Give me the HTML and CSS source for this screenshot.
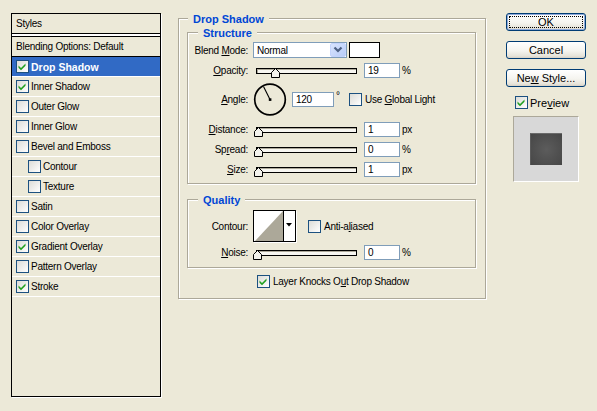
FILE: index.html
```html
<!DOCTYPE html>
<html>
<head>
<meta charset="utf-8">
<title>Layer Style</title>
<link rel="stylesheet" href="styles.css">
</head>
<body>
<div class="dialog">
  <div class="styles">
    <div class="styles-head">Styles</div>
    <div class="blend-opts">Blending Options: Default</div>
    <ul class="fx-list">
      <li class="fx selected"><span class="cb"><svg width="11" height="11" viewBox="0 0 11 11"><path d="M1.5 4.5 L4 7 L8.5 2.5 L8.5 4.8 L4 9.3 L1.5 6.8 Z" fill="#21a121"/></svg></span>Drop Shadow</li>
      <li class="fx"><span class="cb"><svg width="11" height="11" viewBox="0 0 11 11"><path d="M1.5 4.5 L4 7 L8.5 2.5 L8.5 4.8 L4 9.3 L1.5 6.8 Z" fill="#21a121"/></svg></span>Inner Shadow</li>
      <li class="fx"><span class="cb"></span>Outer Glow</li>
      <li class="fx"><span class="cb"></span>Inner Glow</li>
      <li class="fx"><span class="cb"></span>Bevel and Emboss</li>
      <li class="fx sub"><span class="cb"></span>Contour</li>
      <li class="fx sub"><span class="cb"></span>Texture</li>
      <li class="fx"><span class="cb"></span>Satin</li>
      <li class="fx"><span class="cb"></span>Color Overlay</li>
      <li class="fx"><span class="cb"><svg width="11" height="11" viewBox="0 0 11 11"><path d="M1.5 4.5 L4 7 L8.5 2.5 L8.5 4.8 L4 9.3 L1.5 6.8 Z" fill="#21a121"/></svg></span>Gradient Overlay</li>
      <li class="fx"><span class="cb"></span>Pattern Overlay</li>
      <li class="fx"><span class="cb"><svg width="11" height="11" viewBox="0 0 11 11"><path d="M1.5 4.5 L4 7 L8.5 2.5 L8.5 4.8 L4 9.3 L1.5 6.8 Z" fill="#21a121"/></svg></span>Stroke</li>
    </ul>
  </div>

  <div class="main">
    <div class="group outer">
      <div class="group-title">Drop Shadow</div>

      <div class="group sub-group structure">
        <div class="group-title">Structure</div>
        <div class="row r-blend">
          <span class="lbl">Blend <u>M</u>ode:</span>
          <div class="select"><span class="sel-text">Normal</span><span class="sel-btn"><svg width="14" height="12" viewBox="0 0 14 12"><polyline points="3.5,3.5 7,7 10.5,3.5" fill="none" stroke="#4d6185" stroke-width="2.2"/></svg></span></div>
          <div class="swatch"></div>
        </div>
        <div class="row r-opacity">
          <span class="lbl"><u>O</u>pacity:</span>
          <div class="slider"><div class="track"><span class="thumb" style="left:14px"><svg width="9" height="10" viewBox="0 0 9 10"><polygon points="4.5,0.5 8.5,4.5 8.5,9.5 0.5,9.5 0.5,4.5" fill="#f3f2ec" stroke="#000" stroke-width="1"/></svg></span></div></div>
          <span class="num">19</span><span class="unit">%</span>
        </div>
        <div class="row r-angle">
          <span class="lbl"><u>A</u>ngle:</span>
          <svg class="dial" width="34" height="33" viewBox="0 0 34 33"><circle cx="17" cy="16.5" r="15.3" fill="none" stroke="#000" stroke-width="1.7"/><line x1="17" y1="16.5" x2="10.5" y2="3.5" stroke="#000" stroke-width="1.1"/><rect x="15.8" y="15.3" width="2.6" height="2.6" fill="#000"/></svg>
          <span class="num num-wide">120</span><span class="deg">°</span>
          <span class="cb"></span><span class="cb-text">Use <u>G</u>lobal Light</span>
        </div>
        <div class="row r-distance">
          <span class="lbl"><u>D</u>istance:</span>
          <div class="slider"><div class="track"><span class="thumb" style="left:-3px"><svg width="9" height="10" viewBox="0 0 9 10"><polygon points="4.5,0.5 8.5,4.5 8.5,9.5 0.5,9.5 0.5,4.5" fill="#f3f2ec" stroke="#000" stroke-width="1"/></svg></span></div></div>
          <span class="num">1</span><span class="unit">px</span>
        </div>
        <div class="row r-spread">
          <span class="lbl">Sp<u>r</u>ead:</span>
          <div class="slider"><div class="track"><span class="thumb" style="left:-3px"><svg width="9" height="10" viewBox="0 0 9 10"><polygon points="4.5,0.5 8.5,4.5 8.5,9.5 0.5,9.5 0.5,4.5" fill="#f3f2ec" stroke="#000" stroke-width="1"/></svg></span></div></div>
          <span class="num">0</span><span class="unit">%</span>
        </div>
        <div class="row r-size">
          <span class="lbl"><u>S</u>ize:</span>
          <div class="slider"><div class="track"><span class="thumb" style="left:-3px"><svg width="9" height="10" viewBox="0 0 9 10"><polygon points="4.5,0.5 8.5,4.5 8.5,9.5 0.5,9.5 0.5,4.5" fill="#f3f2ec" stroke="#000" stroke-width="1"/></svg></span></div></div>
          <span class="num">1</span><span class="unit">px</span>
        </div>
      </div>

      <div class="group sub-group quality">
        <div class="group-title">Quality</div>
        <div class="row r-contour">
          <span class="lbl">Contour:</span>
          <div class="contour">
            <svg class="curve" width="29" height="30" viewBox="0 0 29 30"><polygon points="1,30 29,0 29,30" fill="#aca899"/></svg>
            <span class="c-arrow"><svg width="10" height="30" viewBox="0 0 10 30"><polygon points="2,12 8,12 5,15.5" fill="#000"/></svg></span>
          </div>
          <span class="cb cb-aa"></span><span class="cb-text">Anti-a<u>l</u>iased</span>
        </div>
        <div class="row r-noise">
          <span class="lbl"><u>N</u>oise:</span>
          <div class="slider"><div class="track"><span class="thumb" style="left:-4px"><svg width="9" height="10" viewBox="0 0 9 10"><polygon points="4.5,0.5 8.5,4.5 8.5,9.5 0.5,9.5 0.5,4.5" fill="#f3f2ec" stroke="#000" stroke-width="1"/></svg></span></div></div>
          <span class="num">0</span><span class="unit">%</span>
        </div>
      </div>

      <div class="row r-knock">
        <span class="cb"><svg width="11" height="11" viewBox="0 0 11 11"><path d="M1.5 4.5 L4 7 L8.5 2.5 L8.5 4.8 L4 9.3 L1.5 6.8 Z" fill="#21a121"/></svg></span><span class="cb-text">Layer Knocks O<u>u</u>t Drop Shadow</span>
      </div>
    </div>
  </div>

  <div class="side">
    <div class="btn btn-default">OK</div>
    <div class="btn">Cancel</div>
    <div class="btn">Ne<u>w</u> Style...</div>
    <div class="preview-chk">
      <span class="cb"><svg width="11" height="11" viewBox="0 0 11 11"><path d="M1.5 4.5 L4 7 L8.5 2.5 L8.5 4.8 L4 9.3 L1.5 6.8 Z" fill="#21a121"/></svg></span><span>Pre<u>v</u>iew</span>
    </div>
    <div class="preview-box"><div class="preview-sq"></div></div>
  </div>
</div>
</body>
</html>
```

FILE: styles.css
```css
* { box-sizing: border-box; }
html, body { margin: 0; padding: 0; }
body {
  width: 597px;
  height: 411px;
  overflow: hidden;
  background: #ece9d8;
  font-family: "Liberation Sans", Arial, sans-serif;
  font-size: 10px;
  letter-spacing: -0.25px;
  color: #000;
}
u { text-decoration: underline; }

.dialog {
  display: flex;
  align-items: flex-start;
  padding: 13px 0 0 11px;
}

/* ---------- styles list ---------- */
.styles {
  flex: none;
  width: 150px;
  height: 384px;
  border: 1px solid #000;
  box-shadow: 1px 1px 0 #fff;
}
.styles-head {
  height: 20px;
  border-bottom: 1px solid #000;
  padding-left: 4px;
  line-height: 19px;
  margin-bottom: 2px;
  box-shadow: 0 2px 0 #fff;
}
.blend-opts {
  height: 21px;
  border-top: 1px solid #000;
  border-bottom: 1px solid #000;
  padding-left: 4px;
  line-height: 19px;
}
.fx-list { list-style: none; margin: 0; padding: 0; }
.fx {
  height: 20px;
  border-bottom: 1px solid #fff;
  display: flex;
  align-items: center;
  padding-left: 4px;
}
.fx.sub { padding-left: 16px; }
.fx.selected {
  background: #316ac5;
  color: #fff;
  font-weight: bold;
  font-size: 10.5px;
  letter-spacing: 0;
}

.cb {
  flex: none;
  display: block;
  width: 13px;
  height: 13px;
  border: 1px solid #1c5180;
  background: linear-gradient(135deg, #dcdcd7, #fff);
  margin-right: 2px;
}
.cb svg { display: block; }

/* ---------- main group ---------- */
.main {
  flex: none;
  margin-left: 17px;
  margin-top: 5px;
}
.group {
  position: relative;
  border: 1px solid #aca899;
  box-shadow: 1px 1px 0 #fff, inset 1px 1px 0 #fff;
}
.group-title {
  position: absolute;
  top: -6px;
  left: 9px;
  padding: 0 5px;
  background: #ece9d8;
  color: #0046d5;
  font-weight: bold;
  font-size: 11px;
  line-height: 13px;
  letter-spacing: 0;
}
.outer {
  width: 308px;
  padding: 13px 0 10px 8px;
}
.sub-group { width: 289px; }
.sub-group > .group-title { left: 10px; }
.structure { padding-bottom: 6px; }
.quality { margin-top: 15px; padding-bottom: 7px; }

.row {
  display: flex;
  align-items: center;
}
.lbl {
  flex: none;
  width: 60px;
  text-align: right;
  margin-right: 5px;
}
.r-blend { height: 16px; margin-top: 9px; }
.r-opacity { height: 15px; margin-top: 5px; }
.r-angle { height: 33px; margin-top: 5px; }
.r-distance { height: 15px; margin-top: 6px; }
.r-spread, .r-size { height: 15px; margin-top: 5px; }
.r-contour { height: 32px; margin-top: 10px; }
.r-noise { height: 15px; margin-top: 3px; }
.r-knock { height: 13px; margin-top: 7px; margin-left: 70px; }

.select {
  flex: none;
  width: 94px;
  height: 16px;
  border: 1px solid #7f9db9;
  background: #fff;
  display: flex;
  align-items: center;
}
.sel-text { flex: 1; padding-left: 3px; }
.sel-btn {
  width: 16px;
  height: 14px;
  border: 1px solid #c3d3fd;
  border-radius: 2px;
  background: linear-gradient(135deg, #d8e4fe, #b8ccf8);
  display: flex;
  align-items: center;
  justify-content: center;
}
.sel-btn svg { display: block; }
.swatch {
  flex: none;
  width: 31px;
  height: 16px;
  border: 1px solid #000;
  background: #fff;
  margin-left: 2px;
}

.slider {
  flex: none;
  width: 106px;
  height: 15px;
  display: flex;
  align-items: center;
}
.track {
  position: relative;
  width: 101px;
  height: 6px;
  margin-left: 3px;
  border: 1px solid #000;
  background: #f7f6f1;
  box-shadow: inset 1px 1px 0 #aca899;
}
.thumb {
  position: absolute;
  top: -1px;
  width: 9px;
  height: 10px;
}
.thumb svg { display: block; }

.num {
  flex: none;
  width: 36px;
  height: 15px;
  border: 1px solid #7f9db9;
  background: #fff;
  padding-left: 3px;
  line-height: 13px;
  margin-left: 5px;
}
.num-wide { width: 42px; }
.unit { margin-left: 2px; }
.deg {
  width: 13px;
  margin-left: 2px;
  align-self: flex-start;
  margin-top: 7px;
}
.dial { flex: none; display: block; }
.r-angle .cb, .r-contour .cb, .r-knock .cb { margin-right: 3px; }

.contour {
  flex: none;
  width: 43px;
  height: 32px;
  border: 1px solid #000;
  box-shadow: 1px 1px 0 #fff;
  background: #fff;
  display: flex;
}
.curve { display: block; flex: none; }
.c-arrow {
  flex: none;
  width: 12px;
  border-left: 1px solid #000;
  background: #fff;
}
.c-arrow svg { display: block; }
.cb-aa { margin-left: 12px; }

/* ---------- right column ---------- */
.side {
  flex: none;
  margin-left: 20px;
  width: 80px;
  display: flex;
  flex-direction: column;
  font-size: 11px;
  letter-spacing: 0;
}
.btn {
  position: relative;
  height: 18px;
  border: 1px solid #003c74;
  border-radius: 3px;
  background: linear-gradient(180deg, #ffffff 0%, #f5f4ef 55%, #e6e3d9 88%, #d6d0c5 100%);
  text-align: center;
  line-height: 16px;
  margin-top: 10px;
}
.btn:first-child { margin-top: 0; }
.btn-default { box-shadow: inset 0 0 0 1px #8fa9da; }
.btn-default::after {
  content: "";
  position: absolute;
  left: 2px; top: 2px; right: 2px; bottom: 2px;
  border: 1px dotted #000;
}
.preview-chk {
  display: flex;
  align-items: center;
  height: 13px;
  margin: 9px 0 0 9px;
}
.preview-chk .cb { margin-right: 2px; }
.preview-box {
  width: 66px;
  height: 66px;
  margin: 7px 0 0 7px;
  border: 1px solid;
  border-color: #aca899 #fff #fff #aca899;
  background: #d8d8d8;
  display: flex;
  align-items: center;
  justify-content: center;
}
.preview-sq {
  width: 32px;
  height: 32px;
  background: radial-gradient(circle, #5c5c5c 0%, #4f4f4f 60%, #464646 100%);
  border-top: 1px solid #6a6a6a;
  border-left: 1px solid #5a5a5a;
}
```
